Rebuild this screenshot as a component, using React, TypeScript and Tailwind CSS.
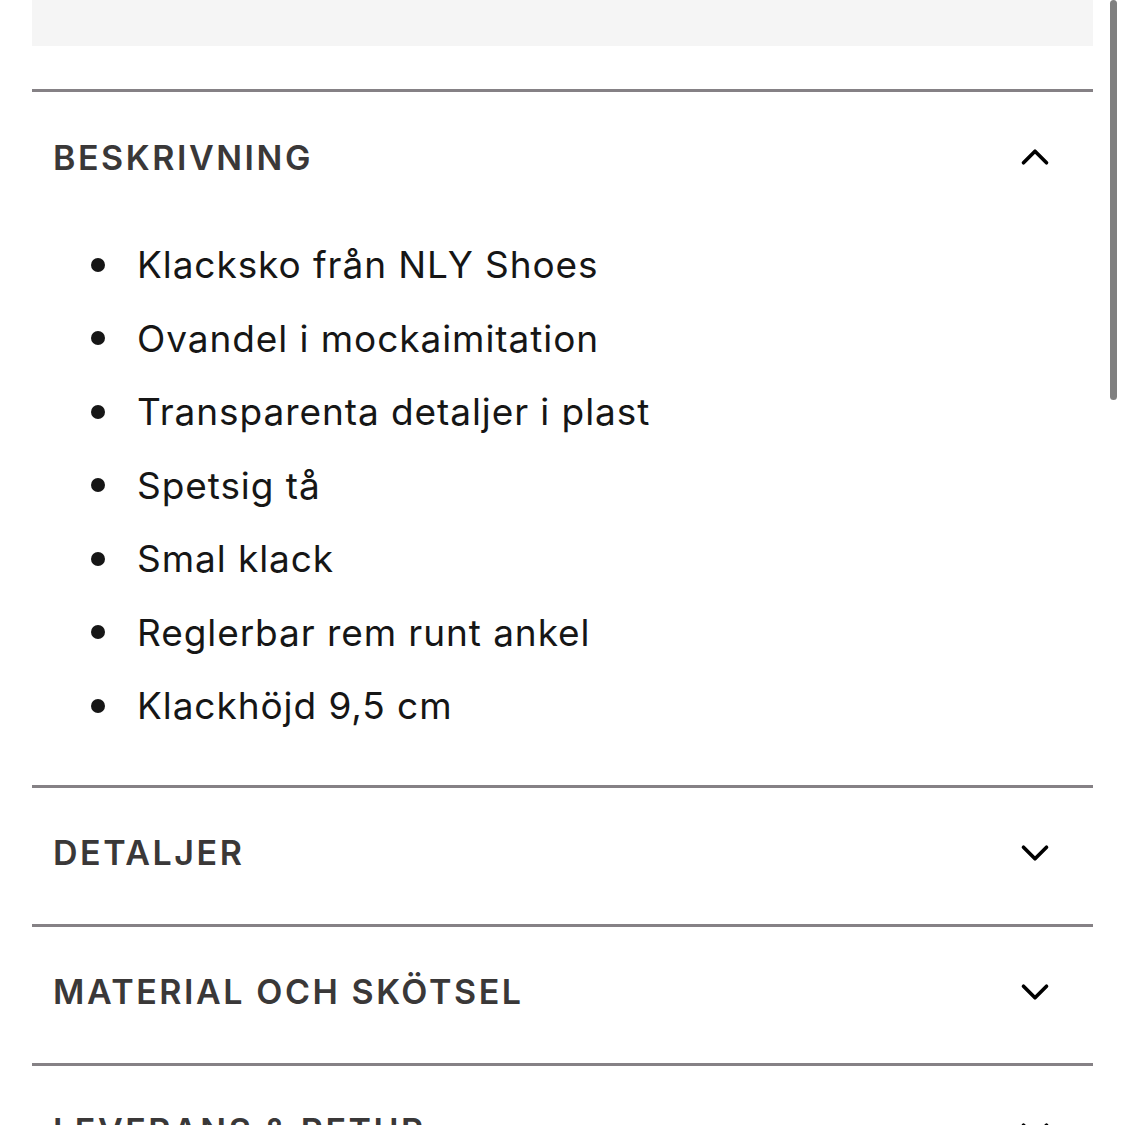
import { ChevronDown, ChevronUp } from 'lucide-react';

const bullets = [
  'Klacksko från NLY Shoes',
  'Ovandel i mockaimitation',
  'Transparenta detaljer i plast',
  'Spetsig tå',
  'Smal klack',
  'Reglerbar rem runt ankel',
  'Klackhöjd 9,5 cm',
];

const collapsed = ['DETALJER', 'MATERIAL OCH SKÖTSEL', 'LEVERANS & RETUR'];

function Divider() {
  return <div className="h-[3px] bg-[#858185]" />;
}

function Header({ title, open }: { title: string; open?: boolean }) {
  return (
    <div className="flex items-center justify-between h-[136px] pb-[6px] pl-[21px] pr-[35px]">
      <span className="text-[34px] font-semibold tracking-[0.075em] text-[#3a3838]">{title}</span>
      {open ? (
        <ChevronUp className="w-[46px] h-[46px] text-black" strokeWidth={1.9} />
      ) : (
        <ChevronDown className="w-[46px] h-[46px] text-black" strokeWidth={1.9} />
      )}
    </div>
  );
}

export default function App() {
  return (
    <div
      className="relative h-[1125px] overflow-hidden bg-white px-[32px]"
      style={{ fontFamily: 'Inter, "Noto Sans", sans-serif' }}
    >
      <div className="h-[46px] bg-[#f5f5f5]" />
      <div className="h-[43px]" />

      <Divider />
      <Header title="BESKRIVNING" open />
      <ul className="pb-[42px]">
        {bullets.map((b) => (
          <li key={b} className="flex items-center h-[73.5px] text-[37px] tracking-[0.025em] text-[#161616]">
            <span className="ml-[59px] w-[14px] h-[14px] rounded-full bg-[#161616]" />
            <span className="ml-[32px]">{b}</span>
          </li>
        ))}
      </ul>

      {collapsed.map((t) => (
        <div key={t}>
          <Divider />
          <Header title={t} />
        </div>
      ))}

      {/* scrollbar */}
      <div className="absolute right-[8px] top-0 w-[7px] h-[400px] rounded-full bg-[#808080]" />
    </div>
  );
}
